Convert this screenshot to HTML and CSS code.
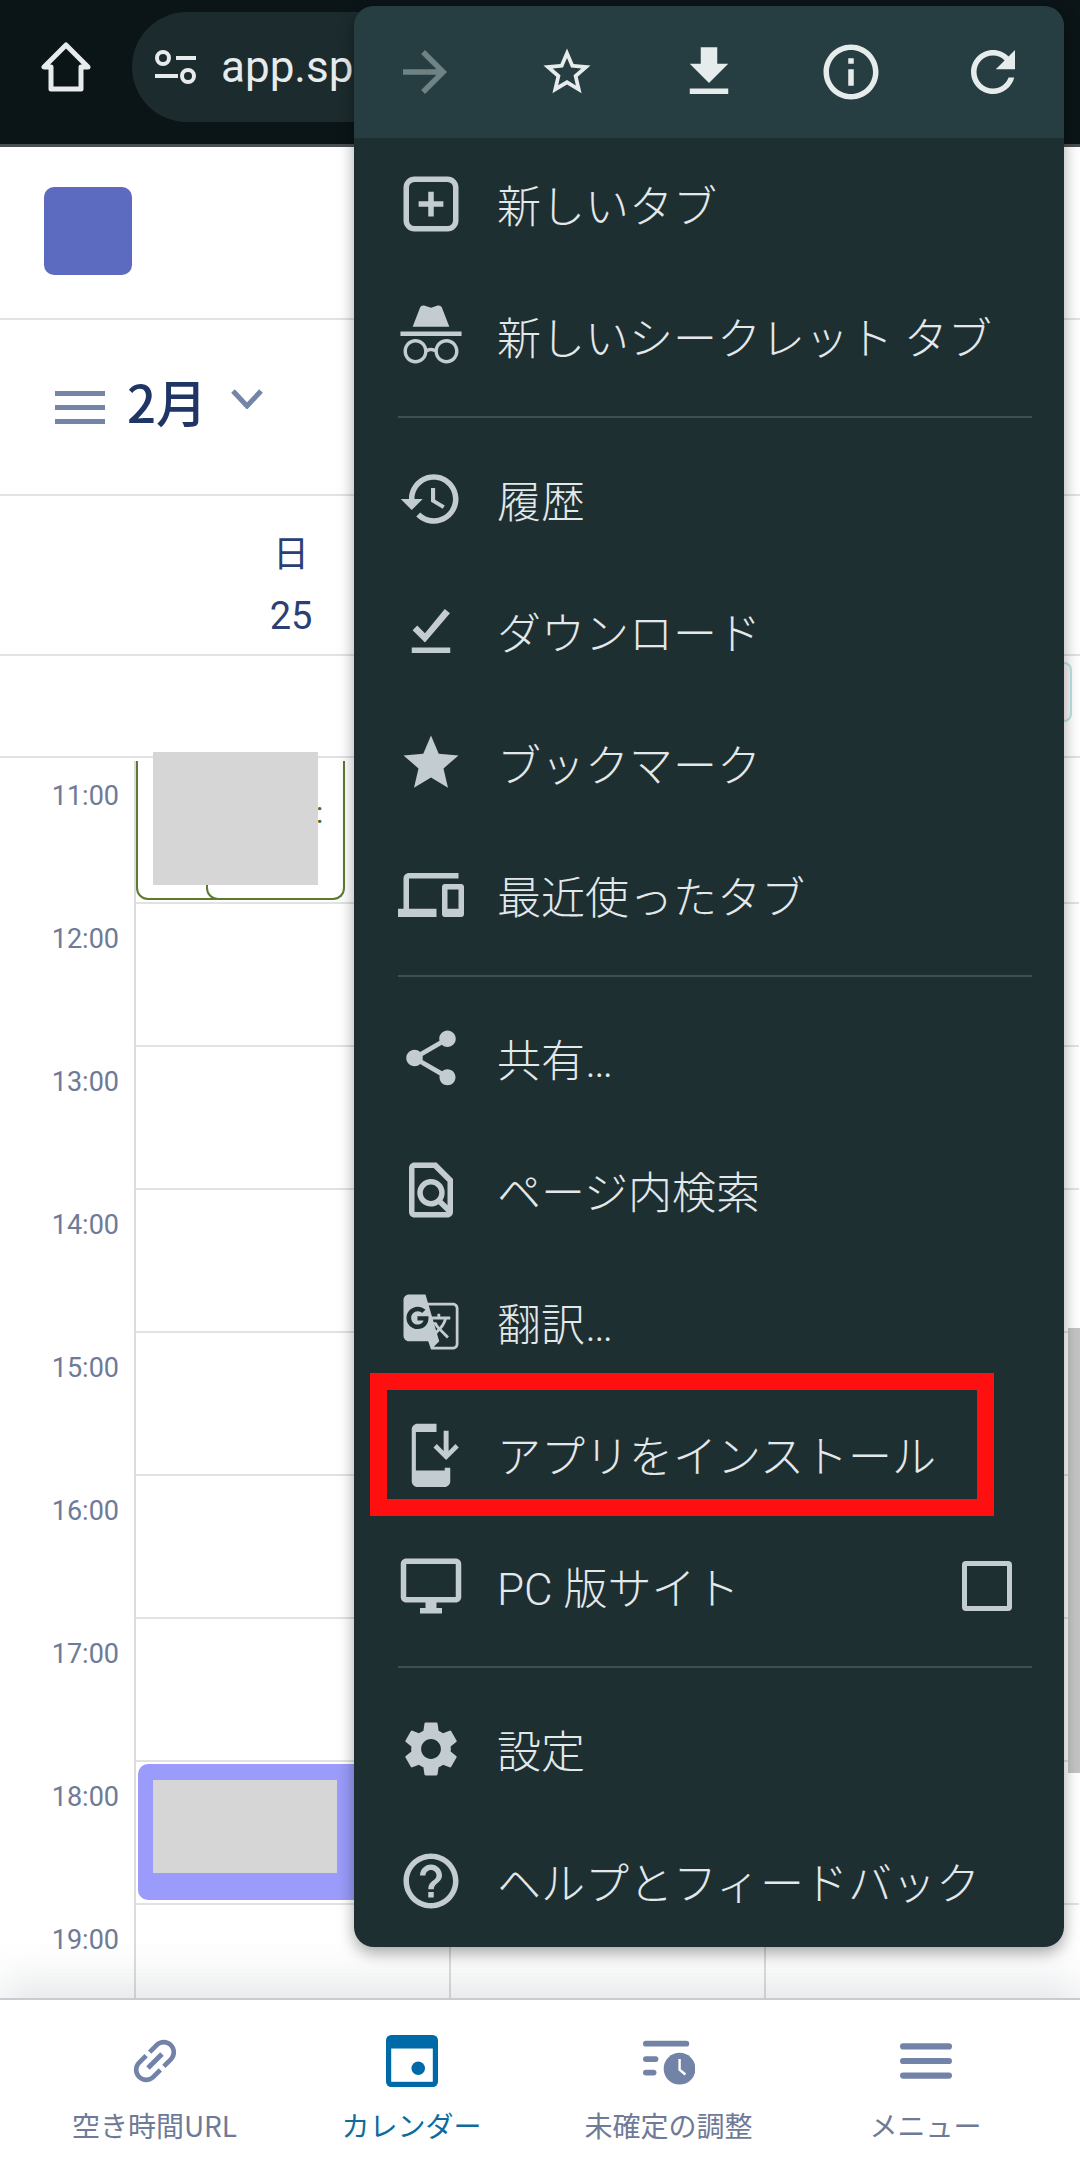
FILE: index.html
```html
<!DOCTYPE html>
<html lang="ja">
<head>
    <meta charset="UTF-8">
    <meta name="viewport" content="width=device-width, initial-scale=1.0">
    <title>カレンダー</title>
    <link rel="stylesheet" href="styles.css">
</head>

<body>
    <div class="page">
        <div class="toolbar">
            <svg class="home-icon" viewBox="0 0 50 50"><path d="M25 3 L3 25 H10 V47 H40 V25 H47 Z" fill="none" stroke="#e8ebec" stroke-width="5" stroke-linejoin="round"/></svg>
            <div class="url-pill">
                <svg class="tune-icon" viewBox="0 0 42 34" fill="none" stroke="#e8ebec" stroke-width="4"><circle cx="8" cy="8" r="6"/><path d="M21 8 H41 M0 26 H23"/><circle cx="33" cy="26" r="6"/></svg>
                <span>app.spirinc.com</span>
            </div>
        </div>

        <div class="app-header"><div class="logo"></div></div>

        <div class="week-bar">
            <svg class="bars-icon" viewBox="0 0 50 33" fill="#7585a8"><rect width="50" height="5"/><rect y="14" width="50" height="5"/><rect y="28" width="50" height="5"/></svg>
            <span class="month">2月</span>
            <svg class="chevron-icon" viewBox="0 0 32 20" fill="none" stroke="#7585a8" stroke-width="5"><path d="M2 2 L16 17 L30 2"/></svg>
        </div>

        <div class="day-head">
            <div class="day-cell">
                <div class="day-name">日</div>
                <div class="day-num">25</div>
            </div>
        </div>

        <div class="all-day"><div class="all-day-item"></div></div>

        <div class="grid">
            <div class="row"><div class="time">11:00</div><div class="cell"></div><div class="cell"></div><div class="cell"></div></div>
            <div class="row"><div class="time">12:00</div><div class="cell"></div><div class="cell"></div><div class="cell"></div></div>
            <div class="row"><div class="time">13:00</div><div class="cell"></div><div class="cell"></div><div class="cell"></div></div>
            <div class="row"><div class="time">14:00</div><div class="cell"></div><div class="cell"></div><div class="cell"></div></div>
            <div class="row"><div class="time">15:00</div><div class="cell"></div><div class="cell"></div><div class="cell"></div></div>
            <div class="row"><div class="time">16:00</div><div class="cell"></div><div class="cell"></div><div class="cell"></div></div>
            <div class="row"><div class="time">17:00</div><div class="cell"></div><div class="cell"></div><div class="cell"></div></div>
            <div class="row"><div class="time">18:00</div><div class="cell"></div><div class="cell"></div><div class="cell"></div></div>
            <div class="row"><div class="time">19:00</div><div class="cell"></div><div class="cell"></div><div class="cell"></div></div>

            <div class="event-outline first"></div>
            <div class="event-outline second"><span class="event-peek">:</span></div>
            <div class="redact morning"></div>
            <div class="event-solid"><div class="redact evening"></div></div>
        </div>

        <nav class="bottom-nav">
            <div class="nav-item">
                <svg class="nav-icon" viewBox="1.500 1.500 21 21" fill="#7383a8"><path transform="rotate(-45 12 12)" d="M3.900 12c0-1.710 1.390-3.100 3.100-3.100h4V7H7c-2.760 0-5 2.240-5 5s2.240 5 5 5h4v-1.900H7c-1.710 0-3.100-1.390-3.100-3.100zM8 13h8v-2H8v2zm9-6h-4v1.900h4c1.710 0 3.100 1.390 3.100 3.100s-1.390 3.100-3.100 3.100h-4V17h4c2.760 0 5-2.240 5-5s-2.240-5-5-5z"/></svg>
                <span>空き時間URL</span>
            </div>
            <div class="nav-item active">
                <svg class="nav-icon" viewBox="0 0 50 50"><rect width="50" height="50" rx="5" fill="#0069a8"/><rect x="5" y="13" width="40" height="32" fill="#fff"/><circle cx="31" cy="32" r="6.500" fill="#0069a8"/></svg>
                <span>カレンダー</span>
            </div>
            <div class="nav-item">
                <svg class="nav-icon" viewBox="0 0 54 50" fill="#7383a8"><rect y="4" width="48" height="6" rx="3"/><rect y="20" width="16" height="6" rx="3"/><rect y="34" width="14" height="6" rx="3"/><circle cx="38" cy="33" r="16.500"/><path d="M38 23 V34 L44 39" fill="none" stroke="#fff" stroke-width="2.500"/></svg>
                <span>未確定の調整</span>
            </div>
            <div class="nav-item">
                <svg class="nav-icon" viewBox="0 0 50 50" fill="#7383a8"><rect y="8" width="50" height="6" rx="3"/><rect y="22" width="50" height="6" rx="3"/><rect y="36" width="50" height="6" rx="3"/></svg>
                <span>メニュー</span>
            </div>
        </nav>

        <div class="scrollbar"></div>

        <div class="menu">
            <div class="menu-top">
                <svg class="ico dim" viewBox="0 0 24 24"><path d="M12 4l-1.410 1.410L16.170 11H4v2h12.170l-5.580 5.590L12 20l8-8z"/></svg>
                <svg class="ico bright" viewBox="-2 -2 28 28"><path d="M22 9.240l-7.190-.62L12 2 9.190 8.630 2 9.240l5.460 4.730L5.820 21 12 17.270 18.180 21l-1.630-7.030L22 9.240zM12 15.400l-3.760 2.270 1-4.280-3.320-2.880 4.380-.38L12 6.100l1.710 4.040 4.380.38-3.320 2.880 1 4.280L12 15.400z"/></svg>
                <svg class="ico bright" viewBox="0 0 24 24"><path d="M19 9h-4V3H9v6H5l7 7 7-7zM5 18v2h14v-2H5z"/></svg>
                <svg class="ico bright" viewBox="0 0 24 24"><path d="M11 7h2v2h-2zm0 4h2v6h-2zm1-9C6.480 2 2 6.480 2 12s4.480 10 10 10 10-4.480 10-10S17.520 2 12 2zm0 18c-4.410 0-8-3.590-8-8s3.590-8 8-8 8 3.590 8 8-3.590 8-8 8z"/></svg>
                <svg class="ico bright" viewBox="0 0 24 24"><path d="M17.650 6.350C16.200 4.900 14.210 4 12 4c-4.420 0-7.990 3.580-7.990 8s3.570 8 7.990 8c3.730 0 6.840-2.550 7.730-6h-2.080c-.82 2.330-3.040 4-5.650 4-3.310 0-6-2.690-6-6s2.690-6 6-6c1.660 0 3.140.69 4.220 1.780L13 11h7V4l-2.350 2.350z"/></svg>
            </div>

            <div class="menu-row">
                <svg class="ico" viewBox="0 0 24 24"><path d="M6 2h12a4 4 0 0 1 4 4v12a4 4 0 0 1-4 4H6a4 4 0 0 1-4-4V6a4 4 0 0 1 4-4zm0 2a2 2 0 0 0-2 2v12a2 2 0 0 0 2 2h12a2 2 0 0 0 2-2V6a2 2 0 0 0-2-2zM11 7.500h2V11h3.500v2H13v3.500h-2V13H7.500v-2H11z"/></svg>
                <span>新しいタブ</span>
            </div>
            <div class="menu-row">
                <svg class="ico" viewBox="1.200 1.200 21.600 21.600"><path d="M17.060 13c-1.860 0-3.420 1.330-3.820 3.100-.95-.41-1.820-.3-2.480-.01C10.350 14.310 8.790 13 6.940 13 4.770 13 3 14.790 3 17s1.770 4 3.940 4c2.060 0 3.740-1.620 3.900-3.680.34-.24 1.230-.69 2.320.02.18 2.050 1.840 3.660 3.900 3.660 2.170 0 3.940-1.790 3.940-4s-1.770-4-3.940-4zM6.940 19.860c-1.560 0-2.810-1.280-2.810-2.860s1.260-2.860 2.810-2.860c1.560 0 2.810 1.280 2.810 2.860s-1.250 2.860-2.810 2.860zm10.120 0c-1.560 0-2.810-1.280-2.810-2.860s1.250-2.860 2.810-2.860 2.820 1.280 2.820 2.860-1.270 2.860-2.820 2.860zM22 10.500H2V12h20v-1.500zm-6.470-7.870c-.22-.49-.78-.75-1.310-.58L12 2.790l-2.230-.74-.05-.01c-.53-.15-1.090.13-1.290.64L6 9h12l-2.440-6.320-.03-.05z"/></svg>
                <span>新しいシークレット タブ</span>
            </div>
            <div class="menu-line"></div>

            <div class="menu-row">
                <svg class="ico" viewBox="0 0 24 24"><path d="M13 3c-4.970 0-9 4.030-9 9H1l3.890 3.890.07.14L9 12H6c0-3.870 3.130-7 7-7s7 3.130 7 7-3.130 7-7 7c-1.930 0-3.680-.79-4.940-2.060l-1.420 1.420C8.270 19.990 10.510 21 13 21c4.970 0 9-4.030 9-9s-4.030-9-9-9zm-1 5v5l4.280 2.540.72-1.210-3.500-2.080V8H12z"/></svg>
                <span>履歴</span>
            </div>
            <div class="menu-row">
                <svg class="ico" viewBox="0 0 24 24"><path d="M5 18h14v2H5zM9.800 16.200 5.300 11.700l1.700-1.700 2.800 2.800L17 4l1.900 1.500z"/></svg>
                <span>ダウンロード</span>
            </div>
            <div class="menu-row">
                <svg class="ico" viewBox="0 0 24 24"><path d="M12 17.270L18.180 21l-1.640-7.030L22 9.240l-7.190-.61L12 2 9.190 8.630 2 9.240l5.460 4.730L5.820 21z"/></svg>
                <span>ブックマーク</span>
            </div>
            <div class="menu-row">
                <svg class="ico" viewBox="0 0 24 24"><path d="M4 6h18V4H4c-1.100 0-2 .9-2 2v11H0v3h14v-3H4V6zm19 2h-6c-.55 0-1 .45-1 1v10c0 .55.45 1 1 1h6c.55 0 1-.45 1-1V9c0-.55-.45-1-1-1zm-1 9h-4v-7h4v7z"/></svg>
                <span>最近使ったタブ</span>
            </div>
            <div class="menu-line"></div>

            <div class="menu-row">
                <svg class="ico" viewBox="0 0 24 24"><path d="M18 16.080c-.76 0-1.440.3-1.960.77L8.910 12.700c.05-.23.09-.46.09-.7s-.04-.47-.09-.7l7.050-4.110c.54.5 1.250.81 2.040.81 1.660 0 3-1.340 3-3s-1.340-3-3-3-3 1.340-3 3c0 .24.04.47.09.7L8.040 9.810C7.500 9.310 6.790 9 6 9c-1.660 0-3 1.340-3 3s1.340 3 3 3c.79 0 1.500-.31 2.040-.81l7.120 4.160c-.05.21-.08.43-.08.65 0 1.610 1.310 2.920 2.920 2.920 1.610 0 2.920-1.310 2.920-2.920s-1.310-2.920-2.920-2.920z"/></svg>
                <span>共有…</span>
            </div>
            <div class="menu-row">
                <svg class="ico" viewBox="0 0 24 24"><path d="M14 2H6c-1.100 0-1.990.9-1.990 2L4 20c0 1.100.89 2 1.990 2H18c1.100 0 2-.9 2-2V8l-6-6zM6 4h7l5 5v8.580l-1.840-1.840c1.280-1.940 1.070-4.570-.64-6.280C14.550 8.490 13.280 8 12 8c-1.280 0-2.550.49-3.530 1.460-1.950 1.950-1.950 5.110 0 7.050.97.97 2.250 1.460 3.530 1.460.96 0 1.920-.28 2.750-.83L17.600 20H6V4zm8.110 11.100c-.56.56-1.310.88-2.110.88s-1.550-.31-2.110-.88c-.56-.56-.88-1.310-.88-2.110s.31-1.550.88-2.110c.56-.57 1.310-.88 2.110-.88s1.550.31 2.110.88c.56.56.88 1.310.88 2.110s-.31 1.550-.88 2.110z"/></svg>
                <span>ページ内検索</span>
            </div>
            <div class="menu-row">
                <svg class="ico" viewBox="0 0 24 24"><path d="M20 5h-9.120L10 2H4c-1.100 0-2 .9-2 2v13c0 1.100.9 2 2 2h7l1 3h8c1.100 0 2-.9 2-2V7c0-1.100-.9-2-2-2zM7.170 14.590c-2.250 0-4.090-1.830-4.090-4.090s1.830-4.090 4.090-4.090c1.040 0 1.990.37 2.740 1.070l.07.06-1.230 1.180-.06-.05c-.29-.27-.78-.59-1.520-.59-1.310 0-2.380 1.090-2.380 2.420s1.070 2.420 2.380 2.420c1.370 0 1.960-.87 2.120-1.460H7.080V9.910h3.950l.01.07c.04.21.05.4.05.61 0 2.350-1.610 4-3.920 4zm6.030-1.710c.33.6.74 1.180 1.190 1.700l-.54.53-.65-2.230zm.77-.76h-.99l-.31-1.040h3.990s-.34 1.310-1.560 2.740c-.52-.62-.89-1.230-1.130-1.700zM21 20c0 .55-.45 1-1 1h-7l2-2-.81-2.770.92-.92L17.790 18l.73-.73-2.710-2.680c.9-1.030 1.600-2.250 1.920-3.510H19v-1.040h-3.640V9h-1.040v1.040h-1.960L11.180 6H20c.55 0 1 .45 1 1v13z"/></svg>
                <span>翻訳…</span>
            </div>
            <div class="menu-row">
                <svg class="ico" viewBox="0 0 24 24"><path d="M7 1h7v3H6.500v14H17v-1h2v5c0 1-1 2-2 2H7c-1 0-2-1-2-2V3c0-1 1-2 2-2z"/><path d="M18.400 3.500h-1.800v7.400l-2.500-2.500-1.200 1.200 4.600 4.600 4.600-4.600-1.200-1.200-2.500 2.500z"/></svg>
                <span>アプリをインストール</span>
                <div class="highlight"></div>
            </div>
            <div class="menu-row">
                <svg class="ico" viewBox="0 0 24 24"><path d="M21 2H3c-1.100 0-2 .9-2 2v12c0 1.100.9 2 2 2h7v2H8v2h8v-2h-2v-2h7c1.100 0 2-.9 2-2V4c0-1.100-.9-2-2-2zm0 14H3V4h18v12z"/></svg>
                <span>PC 版サイト</span>
                <div class="checkbox"></div>
            </div>
            <div class="menu-line"></div>

            <div class="menu-row">
                <svg class="ico" viewBox="0 0 24 24"><path d="M19.140 12.940c.04-.3.06-.61.06-.94 0-.32-.02-.64-.07-.94l2.030-1.580c.18-.14.23-.41.12-.61l-1.920-3.320c-.12-.22-.37-.29-.59-.22l-2.390.96c-.5-.38-1.030-.7-1.620-.94l-.36-2.540c-.04-.24-.24-.41-.48-.41h-3.840c-.24 0-.43.17-.47.41l-.36 2.540c-.59.24-1.130.57-1.620.94l-2.390-.96c-.22-.08-.47 0-.59.22L2.740 8.870c-.12.21-.08.47.12.61l2.030 1.580c-.05.3-.09.63-.09.94s.02.64.07.94l-2.030 1.580c-.18.14-.23.41-.12.61l1.920 3.320c.12.22.37.29.59.22l2.390-.96c.5.38 1.030.7 1.620.94l.36 2.540c.05.24.24.41.48.41h3.840c.24 0 .44-.17.47-.41l.36-2.540c.59-.24 1.130-.56 1.620-.94l2.390.96c.22.08.47 0 .59-.22l1.920-3.320c.12-.22.07-.47-.12-.61l-2.010-1.580zM12 15.600c-1.980 0-3.600-1.620-3.600-3.600s1.620-3.600 3.600-3.600 3.600 1.620 3.600 3.600-1.620 3.600-3.600 3.600z"/></svg>
                <span>設定</span>
            </div>
            <div class="menu-row">
                <svg class="ico" viewBox="0 0 24 24"><path d="M11 18h2v-2h-2v2zm1-16C6.480 2 2 6.480 2 12s4.480 10 10 10 10-4.480 10-10S17.520 2 12 2zm0 18c-4.410 0-8-3.590-8-8s3.590-8 8-8 8 3.590 8 8-3.590 8-8 8zm0-14c-2.210 0-4 1.790-4 4h2c0-1.100.9-2 2-2s2 .9 2 2c0 2-3 1.750-3 5h2c0-2.250 3-2.500 3-5 0-2.210-1.790-4-4-4z"/></svg>
                <span>ヘルプとフィードバック</span>
            </div>
        </div>
    </div>
</body>
</html>
```

FILE: styles.css
```css
* {
    margin: 0;
    padding: 0;
    box-sizing: border-box;
}

body {
    font-family: Roboto, 'Noto Sans CJK JP', sans-serif;
    background: #fff;
}

.page {
    position: relative;
    width: 1080px;
    height: 2167px;
    display: flex;
    flex-direction: column;
    overflow: hidden;
}

/* browser toolbar */
.toolbar {
    height: 147px;
    flex: none;
    display: flex;
    align-items: center;
    padding: 0 0 10px 41px;
    background: #0b1416;
    border-bottom: 3px solid #4a4f52;
}

.home-icon {
    width: 50px;
    height: 50px;
    flex: none;
}

.url-pill {
    margin-left: 41px;
    width: 700px;
    height: 110px;
    flex: none;
    display: flex;
    align-items: center;
    gap: 24px;
    padding-left: 23px;
    border-radius: 55px;
    background: #1c2b2d;
    color: #e8ebec;
    font-size: 44px;
    white-space: nowrap;
}

.tune-icon {
    width: 42px;
    height: 34px;
    flex: none;
}

/* page header */
.app-header {
    height: 173px;
    flex: none;
    padding: 40px 0 0 44px;
    border-bottom: 2px solid #e2e2e2;
}

.logo {
    width: 88px;
    height: 88px;
    border-radius: 10px;
    background: #5c6bc0;
}

.week-bar {
    height: 176px;
    flex: none;
    display: flex;
    align-items: center;
    padding-left: 55px;
    border-bottom: 2px solid #e2e2e2;
}

.bars-icon {
    width: 50px;
    height: 33px;
    flex: none;
}

.month {
    margin: 0 0 12px 22px;
    color: #1f3566;
    font-family: 'Noto Sans CJK JP', sans-serif;
    font-size: 51px;
    font-weight: 500;
    line-height: 60px;
}

.chevron-icon {
    width: 32px;
    height: 20px;
    flex: none;
    margin: 0 0 16px 24px;
}

.day-head {
    height: 160px;
    flex: none;
    padding-left: 134px;
    border-bottom: 2px solid #e2e2e2;
}

.day-cell {
    width: 314px;
    padding-top: 29px;
    text-align: center;
    color: #2a4074;
    font-size: 36px;
    line-height: 60px;
}

.day-num {
    font-size: 38px;
    line-height: 62px;
}

.all-day {
    height: 102px;
    flex: none;
    display: flex;
    justify-content: flex-end;
    padding: 6px 8px 0 0;
    border-bottom: 2px solid #e2e2e2;
}

.all-day-item {
    width: 120px;
    height: 60px;
    border: 2px solid #b9e6e1;
    border-radius: 8px;
    background: #fdf4f6;
}

/* time grid */
.grid {
    position: relative;
    flex: 1;
    min-height: 0;
    padding-top: 3px;
}

.row {
    height: 143px;
    display: grid;
    grid-template-columns: 134px repeat(3, 315px);
}

.time {
    padding: 17px 15px 0 0;
    text-align: right;
    color: #6e7a97;
    font-size: 27px;
    line-height: 36px;
}

.cell {
    border-left: 2px solid #dcdcdc;
    border-bottom: 2px solid #e2e2e2;
}

.event-outline {
    position: absolute;
    top: 3px;
    height: 139px;
    border: 2px solid #5c7a32;
    border-top: none;
    border-radius: 0 0 12px 12px;
    background: #fff;
}

.event-outline.first {
    left: 136px;
    width: 90px;
}

.event-outline.second {
    left: 206px;
    width: 139px;
}

.event-peek {
    position: absolute;
    left: 108px;
    top: 32px;
    color: #4a6a2a;
    font-size: 30px;
    line-height: 40px;
}

.redact {
    position: absolute;
    background: #d6d6d6;
}

.redact.morning {
    left: 153px;
    top: -6px;
    width: 165px;
    height: 133px;
}

.event-solid {
    position: absolute;
    left: 138px;
    top: 1006px;
    width: 300px;
    height: 136px;
    border-radius: 10px;
    background: #9a9bfa;
}

.redact.evening {
    left: 15px;
    top: 16px;
    width: 184px;
    height: 93px;
}

/* bottom nav */
.bottom-nav {
    position: relative;
    height: 169px;
    flex: none;
    display: grid;
    grid-template-columns: repeat(4, 257px);
    padding: 35px 0 0 26px;
    background: #fff;
    border-top: 2px solid #c8ccd0;
    box-shadow: 0 -16px 40px rgba(90, 100, 115, 0.16);
}

.nav-item {
    display: flex;
    flex-direction: column;
    align-items: center;
    gap: 18px;
    color: #6e7a97;
    font-family: 'Noto Sans CJK JP', sans-serif;
    font-size: 28px;
    line-height: 40px;
}

.nav-item.active {
    color: #0e6b9c;
}

.nav-icon {
    width: 52px;
    height: 52px;
    flex: none;
}

.scrollbar {
    position: absolute;
    top: 1328px;
    right: 0;
    width: 12px;
    height: 445px;
    background: #c4c4c4;
}

/* overflow menu */
.menu {
    position: absolute;
    left: 354px;
    top: 6px;
    width: 710px;
    height: 1941px;
    border-radius: 20px;
    background: #1e2f32;
    box-shadow: 0 6px 16px rgba(0, 0, 0, 0.35);
    color: #e3e8ea;
    font-size: 44px;
    font-weight: 300;
}

.menu-top {
    height: 132px;
    display: flex;
    align-items: center;
    gap: 76px;
    padding-left: 38px;
    border-radius: 20px 20px 0 0;
    background: #263d41;
}

.ico {
    width: 66px;
    height: 66px;
    flex: none;
    fill: #c3ccd1;
}

.ico.bright {
    fill: #e6ebec;
}

.ico.dim {
    fill: #6f8385;
}

.menu-row {
    position: relative;
    height: 132px;
    display: flex;
    align-items: center;
    gap: 33px;
    padding-left: 44px;
    white-space: nowrap;
}

.menu-line {
    height: 2px;
    margin: 14px 32px 15px 44px;
    background: #3f5053;
}

.menu-row .highlight {
    position: absolute;
    left: 16px;
    top: -15px;
    width: 624px;
    height: 143px;
    border: 17px solid #ff0f0f;
}

.checkbox {
    position: absolute;
    left: 608px;
    top: 41px;
    width: 50px;
    height: 50px;
    border: 5px solid #c3ccd1;
    border-radius: 4px;
}
```
